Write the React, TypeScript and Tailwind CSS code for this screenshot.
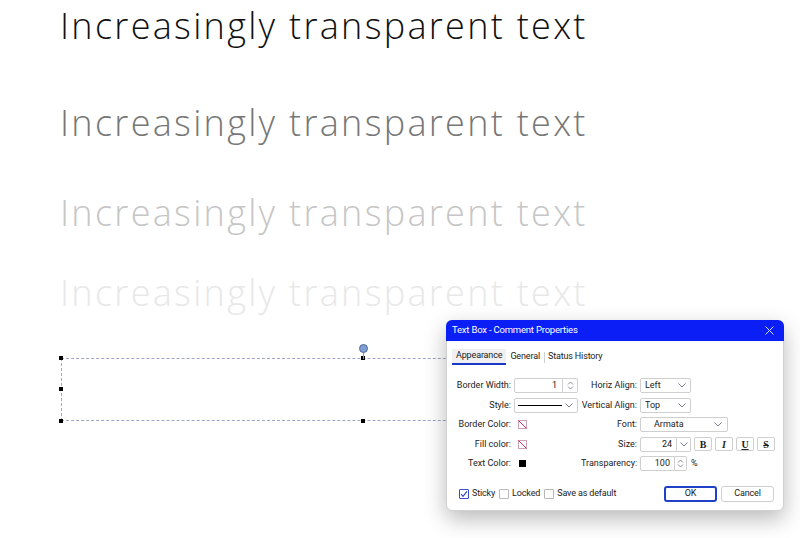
import React from 'react';

const Chevron = () => (
  <svg width="8" height="5" viewBox="0 0 8 5" className="text-gray-500">
    <path d="M0.5 0.5 L4 4 L7.5 0.5" fill="none" stroke="currentColor" strokeWidth="0.9" />
  </svg>
);

const Spinner = () => (
  <svg width="7" height="9" viewBox="0 0 7 9" className="text-gray-500">
    <path d="M1 3.5 L3.5 1 L6 3.5 M1 5.5 L3.5 8 L6 5.5" fill="none" stroke="currentColor" strokeWidth="0.8" />
  </svg>
);

const NoColor = () => (
  <svg width="9" height="9" viewBox="0 0 9 9">
    <rect x="0.5" y="0.5" width="8" height="8" fill="white" stroke="#c08ca0" strokeWidth="0.8" />
    <path d="M0.5 0.5 L8.5 8.5" stroke="#e0306a" strokeWidth="1" />
  </svg>
);

const Label = ({ children }: { children: React.ReactNode }) => (
  <div className="text-right whitespace-nowrap text-[9px] text-[#222] leading-none">{children}</div>
);

const Checkbox = ({ checked }: { checked?: boolean }) => (
  <div
    className={
      checked
        ? 'w-[10px] h-[10px] border border-[#3a4fd0] rounded-[1px] flex items-center justify-center bg-white'
        : 'w-[10px] h-[10px] border border-[#b8b8b8] rounded-[1px] bg-white'
    }
  >
    {checked && (
      <svg width="8" height="8" viewBox="0 0 8 8">
        <path d="M1 4 L3 6.3 L7 1.3" fill="none" stroke="#2a40c8" strokeWidth="1.1" />
      </svg>
    )}
  </div>
);

const Handle = ({ className }: { className: string }) => (
  <div className={`absolute w-[4px] h-[4px] bg-black ${className}`} />
);

export default function App() {
  const line = 'Increasingly transparent text';
  return (
    <div className="relative w-[800px] h-[538px] bg-white overflow-hidden [font-family:Roboto,sans-serif]">
      {/* Canvas text */}
      <div className="pl-[60px] [font-family:'Open_Sans',sans-serif] font-light text-[36px] tracking-[2.3px] leading-none">
        <div className="pt-[8px] text-[#111]">{line}</div>
        <div className="pt-[61px] text-[#777]">{line}</div>
        <div className="pt-[54px] text-[#c6c6c6]">{line}</div>
        <div className="pt-[44px] text-[#e8e8e8]">{line}</div>
      </div>

      {/* Selected text box */}
      <div className="absolute left-[61px] top-[358px] w-[420px] h-[63px] border border-dashed border-[#9aa8c8]">
        <Handle className="-left-[3px] -top-[3px]" />
        <Handle className="-left-[3px] top-[28px]" />
        <Handle className="-left-[3px] -bottom-[3px]" />
        <Handle className="left-[299px] -top-[3px]" />
        <Handle className="left-[299px] -bottom-[3px]" />
        <div className="absolute left-[301px] -top-[6px] w-px h-[6px] bg-[#7a90c0]" />
        <div className="absolute left-[297px] -top-[15px] w-[9px] h-[9px] rounded-full bg-[#7f9ecf] border border-[#4a6aa0]" />
      </div>

      {/* Dialog */}
      <div className="absolute left-[446px] top-[320px] w-[338px] h-[191px] bg-white rounded-[6px] border border-[#d0d0d0] shadow-[0_8px_22px_rgba(0,0,0,0.28)] flex flex-col text-[#222]">
        <div className="h-[21px] shrink-0 bg-[#0a1ef5] rounded-t-[6px] flex items-center justify-between pl-[6px] pr-[10px] -mx-px -mt-px">
          <span className="text-[9.5px] tracking-[-0.2px] text-white">Text Box - Comment Properties</span>
          <svg width="9" height="9" viewBox="0 0 9 9">
            <path d="M0.5 0.5 L8.5 8.5 M8.5 0.5 L0.5 8.5" stroke="#d8e0ff" strokeWidth="1" />
          </svg>
        </div>

        {/* Tabs */}
        <div className="flex items-center pl-[5px] pt-[8px] text-[9px] tracking-[-0.15px] leading-none">
          <div className="px-[4px] pt-[2px] pb-[3px] bg-[#f0f0f2] border-b-2 border-[#1838c8]">Appearance</div>
          <div className="px-[4px] pb-[1px]">General</div>
          <div className="w-px h-[11px] bg-[#cfcfcf]" />
          <div className="px-[3px] pb-[1px]">Status History</div>
        </div>

        {/* Fields */}
        <div className="grid grid-cols-[60px_64px_56px_1fr] auto-rows-[19.5px] gap-x-[3px] items-center pl-[4px] pt-[11px]">
          <Label>Border Width:</Label>
          <div className="flex h-[15px]">
            <div className="w-[49px] border border-[#cfcfcf] rounded-l-[2px] text-right pr-[5px] text-[9px] leading-[13px]">1</div>
            <div className="w-[15px] border border-l-0 border-[#cfcfcf] rounded-r-[2px] flex items-center justify-center">
              <Spinner />
            </div>
          </div>
          <Label>Horiz Align:</Label>
          <div className="w-[51px] h-[15px] border border-[#cfcfcf] rounded-[2px] flex items-center justify-between pl-[4px] pr-[4px] text-[9px]">
            <span>Left</span>
            <Chevron />
          </div>

          <Label>Style:</Label>
          <div className="w-[64px] h-[15px] border border-[#cfcfcf] rounded-[2px] flex items-center justify-between pl-[3px] pr-[4px]">
            <div className="w-[44px] h-px bg-black" />
            <Chevron />
          </div>
          <Label>Vertical Align:</Label>
          <div className="w-[51px] h-[15px] border border-[#cfcfcf] rounded-[2px] flex items-center justify-between pl-[4px] pr-[4px] text-[9px]">
            <span>Top</span>
            <Chevron />
          </div>

          <Label>Border Color:</Label>
          <div className="pl-[4px] flex items-center"><NoColor /></div>
          <Label>Font:</Label>
          <div className="w-[88px] h-[15px] border border-[#cfcfcf] rounded-[2px] flex items-center justify-between pl-[13px] pr-[5px] text-[9px]">
            <span>Armata</span>
            <Chevron />
          </div>

          <Label>Fill color:</Label>
          <div className="pl-[4px] flex items-center"><NoColor /></div>
          <Label>Size:</Label>
          <div className="flex items-center">
            <div className="flex h-[15px]">
              <div className="w-[37px] border border-[#cfcfcf] rounded-l-[2px] text-right pr-[4px] text-[9px] leading-[13px]">24</div>
              <div className="w-[14px] border border-l-0 border-[#cfcfcf] rounded-r-[2px] flex items-center justify-center">
                <Chevron />
              </div>
            </div>
            <div className="flex gap-[3px] ml-[3px] [font-family:'Liberation_Serif',serif] text-[10px] font-bold">
              <div className="w-[18px] h-[14px] border border-[#cfcfcf] rounded-[2px] flex items-center justify-center">B</div>
              <div className="w-[18px] h-[14px] border border-[#cfcfcf] rounded-[2px] flex items-center justify-center italic">I</div>
              <div className="w-[18px] h-[14px] border border-[#cfcfcf] rounded-[2px] flex items-center justify-center underline">U</div>
              <div className="w-[18px] h-[14px] border border-[#cfcfcf] rounded-[2px] flex items-center justify-center line-through">S</div>
            </div>
          </div>

          <Label>Text Color:</Label>
          <div className="pl-[5px] flex items-center"><div className="w-[7px] h-[7px] bg-black" /></div>
          <Label>Transparency:</Label>
          <div className="flex items-center">
            <div className="flex h-[15px]">
              <div className="w-[35px] border border-[#cfcfcf] rounded-l-[2px] text-right pr-[4px] text-[9px] leading-[13px]">100</div>
              <div className="w-[12px] border border-l-0 border-[#cfcfcf] rounded-r-[2px] flex items-center justify-center">
                <Spinner />
              </div>
            </div>
            <span className="ml-[4px] text-[9px]">%</span>
          </div>
        </div>

        {/* Footer */}
        <div className="flex items-center justify-between pl-[12px] pr-[9px] pt-[12px] text-[9px] tracking-[-0.15px]">
          <div className="flex items-center">
            <Checkbox checked />
            <span className="ml-[3px]">Sticky</span>
            <div className="ml-[4px]"><Checkbox /></div>
            <span className="ml-[3px]">Locked</span>
            <div className="ml-[4px]"><Checkbox /></div>
            <span className="ml-[3px]">Save as default</span>
          </div>
          <div className="flex gap-[4px]">
            <div className="w-[53px] h-[16px] border-2 border-[#2040c8] rounded-[3px] flex items-center justify-center">OK</div>
            <div className="w-[53px] h-[16px] border border-[#cfcfcf] rounded-[3px] flex items-center justify-center">Cancel</div>
          </div>
        </div>
      </div>
    </div>
  );
}
